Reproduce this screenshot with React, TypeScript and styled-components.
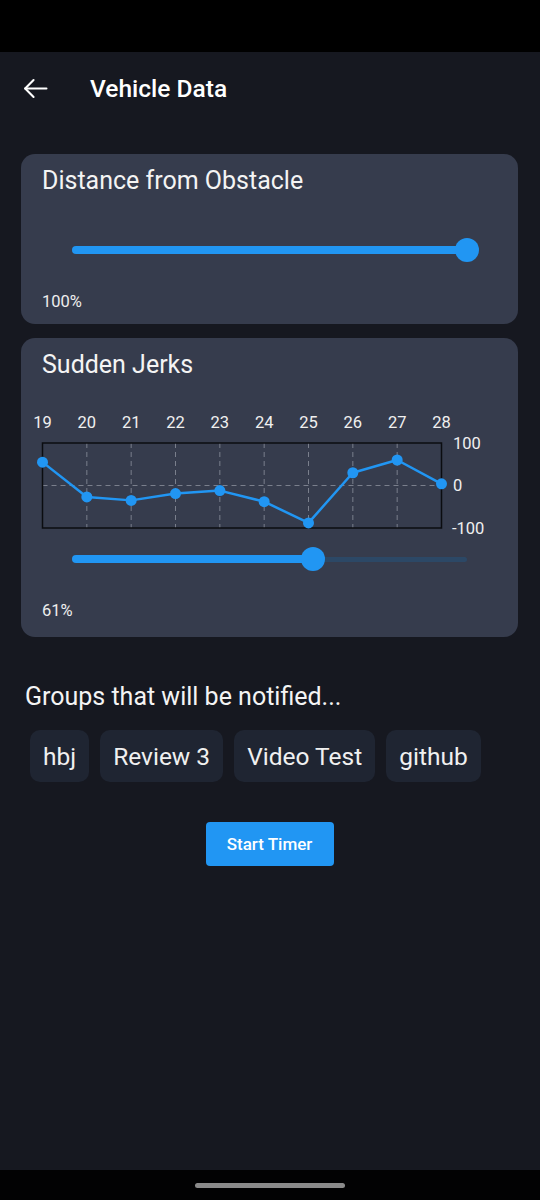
import styled, { createGlobalStyle } from "styled-components";

const GlobalStyle = createGlobalStyle`
  html, body {
    margin: 0;
    padding: 0;
    background: #161820;
  }
  body {
    font-family: Roboto, "Noto Sans", sans-serif;
    color: #ffffff;
  }
`;

const Screen = styled.div`
  min-height: 1200px;
  display: flex;
  flex-direction: column;
  background: #161820;
`;

const StatusBar = styled.div`
  height: 52px;
  background: #000;
`;

const Header = styled.header`
  height: 72px;
  display: flex;
  align-items: center;
  padding-left: 20px;
  gap: 39px;
`;

const BackButton = styled.button`
  background: none;
  border: none;
  padding: 0;
  width: 31px;
  height: 31px;
  display: flex;
  align-items: center;
  justify-content: center;
  color: #fff;
`;

const Title = styled.h1`
  margin: 0;
  font-size: 24.5px;
  font-weight: 500;
`;

const Main = styled.main`
  flex: 1;
  display: flex;
  flex-direction: column;
  padding: 30px 22px 0 21px;
`;

const Card = styled.section<{ $bottom: number }>`
  background: #363c4d;
  border-radius: 14px;
  padding: 13px 21px ${(p) => p.$bottom}px;
  display: flex;
  flex-direction: column;
  & + & {
    margin-top: 14px;
  }
`;

const CardTitle = styled.h2`
  margin: 0;
  font-size: 25px;
  line-height: 28px;
  font-weight: 400;
  color: #f4f4f4;
`;

const SliderWrap = styled.div<{ $top: number }>`
  position: relative;
  height: 24px;
  margin: ${(p) => p.$top}px 30px 0;
  display: flex;
  align-items: center;
`;

const Track = styled.div`
  position: relative;
  flex: 1;
  height: 5px;
  border-radius: 3px;
  background: #2c4866;
`;

const ActiveTrack = styled.div`
  position: absolute;
  left: 0;
  top: 50%;
  height: 8px;
  transform: translateY(-50%);
  border-radius: 4px;
  background: #2196f3;
`;

const Thumb = styled.div`
  position: absolute;
  top: 50%;
  width: 24px;
  height: 24px;
  border-radius: 50%;
  background: #2196f3;
  transform: translate(-50%, -50%);
`;

const Percent = styled.div<{ $top: number }>`
  margin-top: ${(p) => p.$top}px;
  font-size: 16.5px;
  line-height: 18px;
  color: #eeeeee;
`;

const ChartSvg = styled.svg`
  display: block;
  margin-top: 22px;
  overflow: visible;
`;

const GroupsTitle = styled.h3`
  margin: 47px 0 0 4px;
  font-size: 25px;
  line-height: 26px;
  font-weight: 400;
  color: #f4f4f4;
`;

const ChipRow = styled.div`
  display: flex;
  gap: 11px;
  margin: 20px 0 0 9px;
`;

const Chip = styled.span`
  height: 52px;
  padding: 0 13px;
  display: flex;
  align-items: center;
  border-radius: 10px;
  background: #1f2532;
  font-size: 24.5px;
  color: #f0f0f0;
`;

const ButtonRow = styled.div`
  display: flex;
  justify-content: center;
  margin-top: 40px;
`;

const StartButton = styled.button`
  width: 128px;
  height: 44px;
  border: none;
  border-radius: 4px;
  background: #2196f3;
  color: #fff;
  font-family: Roboto, sans-serif;
  font-size: 17px;
  font-weight: 500;
`;

const NavBar = styled.div`
  height: 30px;
  background: #020203;
  display: flex;
  align-items: center;
  justify-content: center;
`;

const NavPill = styled.div`
  width: 150px;
  height: 5px;
  border-radius: 3px;
  background: #8a8a8a;
`;

const Slider = ({ value, top }: { value: number; top: number }) => (
  <SliderWrap $top={top}>
    <Track>
      <ActiveTrack style={{ width: `${value}%` }} />
      <Thumb style={{ left: `${value}%` }} />
    </Track>
  </SliderWrap>
);

const days = [19, 20, 21, 22, 23, 24, 25, 26, 27, 28];
const jerks = [55, -27, -35, -19, -12, -38, -88, 30, 60, 4];

// chart box inside svg coords
const BOX_L = 0.5;
const BOX_R = 399.5;
const BOX_T = 42;
const BOX_B = 127;

const JerkChart = () => {
  const step = (BOX_R - BOX_L) / (days.length - 1);
  const xs = days.map((_, i) => BOX_L + i * step);
  const yOf = (v: number) => BOX_T + ((100 - v) / 200) * (BOX_B - BOX_T);
  const zero = yOf(0);
  const points = jerks.map((v, i) => `${xs[i]},${yOf(v)}`).join(" ");

  return (
    <ChartSvg width={455} height={140} viewBox="0 0 455 140">
      {xs.slice(1, -1).map((x) => (
        <line
          key={x}
          x1={x}
          x2={x}
          y1={BOX_T}
          y2={BOX_B}
          stroke="#7a7f8c"
          strokeWidth={1}
          strokeDasharray="5 4"
        />
      ))}
      <line
        x1={BOX_L}
        x2={BOX_R}
        y1={zero}
        y2={zero}
        stroke="#7a7f8c"
        strokeWidth={1}
        strokeDasharray="5 4"
      />
      <rect
        x={BOX_L}
        y={BOX_T}
        width={BOX_R - BOX_L}
        height={BOX_B - BOX_T}
        fill="none"
        stroke="#0b0c10"
        strokeWidth={1.5}
      />
      {days.map((d, i) => (
        <text
          key={d}
          x={xs[i]}
          y={27}
          textAnchor="middle"
          fontSize={16.5}
          fill="#f0f0f0"
          fontFamily="Roboto, sans-serif"
        >
          {d}
        </text>
      ))}
      <text x={411} y={48} fontSize={16.5} fill="#f0f0f0" fontFamily="Roboto, sans-serif">
        100
      </text>
      <text x={411} y={90} fontSize={16.5} fill="#f0f0f0" fontFamily="Roboto, sans-serif">
        0
      </text>
      <text x={410} y={133} fontSize={16.5} fill="#f0f0f0" fontFamily="Roboto, sans-serif">
        -100
      </text>
      <polyline points={points} fill="none" stroke="#2196f3" strokeWidth={2.5} strokeLinejoin="round" />
      {jerks.map((v, i) => (
        <circle key={i} cx={xs[i]} cy={yOf(v)} r={5.5} fill="#2196f3" />
      ))}
    </ChartSvg>
  );
};

const groups = ["hbj", "Review 3", "Video Test", "github"];

const App = () => {
  return (
    <Screen>
      <GlobalStyle />
      <StatusBar />
      <Header>
        <BackButton aria-label="Back">
          <svg width="31" height="31" viewBox="0 0 24 24" fill="none" stroke="#fff" strokeWidth={1.6} strokeLinecap="round" strokeLinejoin="round">
            <path d="M20.5 12H4" />
            <path d="M10.5 5.5L4 12l6.5 6.5" />
          </svg>
        </BackButton>
        <Title>Vehicle Data</Title>
      </Header>
      <Main>
        <Card $bottom={13}>
          <CardTitle>Distance from Obstacle</CardTitle>
          <Slider value={100} top={43} />
          <Percent $top={31}>100%</Percent>
        </Card>
        <Card $bottom={17}>
          <CardTitle>Sudden Jerks</CardTitle>
          <JerkChart />
          <Slider value={61} top={6} />
          <Percent $top={31}>61%</Percent>
        </Card>
        <GroupsTitle>Groups that will be notified...</GroupsTitle>
        <ChipRow>
          {groups.map((g) => (
            <Chip key={g}>{g}</Chip>
          ))}
        </ChipRow>
        <ButtonRow>
          <StartButton>Start Timer</StartButton>
        </ButtonRow>
      </Main>
      <NavBar>
        <NavPill />
      </NavBar>
    </Screen>
  );
};

export default App;
